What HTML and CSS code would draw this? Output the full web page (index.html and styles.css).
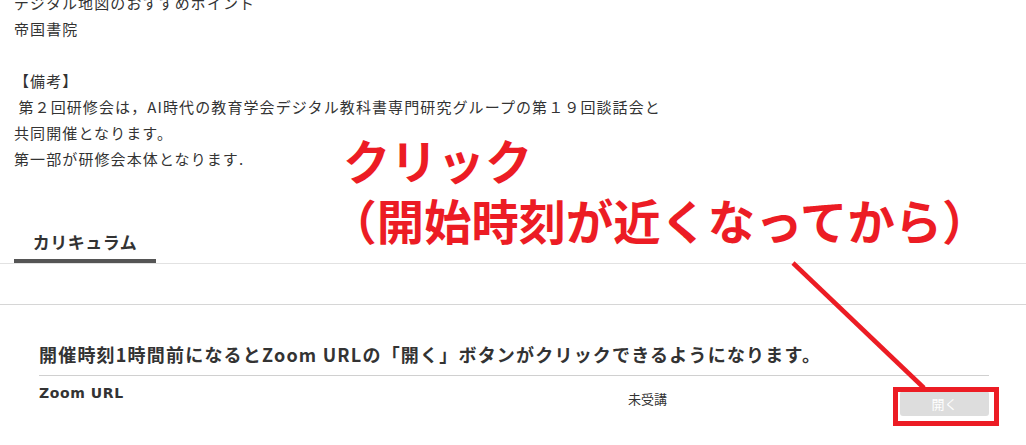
FILE: index.html
```html
<!DOCTYPE html>
<html lang="ja">
<head>
    <meta charset="UTF-8">
    <meta name="viewport" content="width=device-width, initial-scale=1.0">
    <title>研修会 | カリキュラム</title>
    <link rel="stylesheet" href="styles.css">
</head>
<body>
    <div class="page">
        <!-- Notes -->
        <div class="notes">
            デジタル地図のおすすめポイント<br>
            帝国書院<br>
            <br>
            【備考】<br>
            &nbsp;第２回研修会は，AI時代の教育学会デジタル教科書専門研究グループの第１９回談話会と<br>
            共同開催となります。<br>
            第一部が研修会本体となります.
        </div>

        <!-- Tabs -->
        <div class="tabs">
            <span class="tab">カリキュラム</span>
        </div>

        <!-- Curriculum -->
        <section class="course">
            <h2 class="course-title">開催時刻1時間前になるとZoom URLの「開く」ボタンがクリックできるようになります。</h2>
            <div class="zoom-row">
                <div class="zoom-label">Zoom URL</div>
                <div class="zoom-status">未受講</div>
                <button class="open-btn" disabled>開く</button>
            </div>
        </section>

        <!-- Red annotation over the page -->
        <div class="annotation">
            <span class="annotation-line">クリック</span>
            <span class="annotation-line annotation-sub">（開始時刻が近くなってから）</span>
        </div>
        <svg class="annotation-arrow" width="1026" height="445" viewBox="0 0 1026 445">
            <line x1="793" y1="263" x2="924" y2="388" stroke="#ec1c24" stroke-width="4.5" />
            <rect x="895.5" y="389.5" width="101" height="34" fill="none" stroke="#ec1c24" stroke-width="5" />
        </svg>
    </div>
</body>
</html>
```

FILE: styles.css
```css
body {
    margin: 0;
    padding: 0;
    background-color: #fff;
    color: #333;
    font-family: "Noto Sans CJK JP", sans-serif;
    overflow: hidden;
}

.page {
    position: relative;
    height: 445px;
    overflow: hidden;
}

.notes {
    margin-top: -10px;
    padding: 0 14px;
    font-size: 15px;
    line-height: 26px;
    letter-spacing: 1.1px;
}

.tabs {
    display: flex;
    margin-top: 48px;
    padding-left: 14px;
    border-bottom: 1px solid #e2e2e2;
}

.tab {
    width: 142px;
    padding: 10px 0 5px;
    text-align: center;
    font-size: 17px;
    font-weight: bold;
    line-height: 24px;
    letter-spacing: 0.5px;
    border-bottom: 4px solid #555;
}

.course {
    margin-top: 40px;
    padding: 36px 37px 0 39px;
    border-top: 1px solid #d6d6d6;
}

.course-title {
    margin: 0;
    padding-bottom: 8px;
    font-size: 18px;
    font-weight: bold;
    line-height: 26px;
    letter-spacing: 1.2px;
    border-bottom: 1px solid #d0d0d0;
}

.zoom-row {
    display: flex;
    align-items: flex-start;
}

.zoom-label {
    width: 589px;
    padding-top: 7px;
    font-family: "DejaVu Sans", sans-serif;
    font-size: 14px;
    font-weight: bold;
    line-height: 20px;
    letter-spacing: 0.6px;
}

.zoom-status {
    flex: 1;
    padding-top: 14px;
    font-size: 13px;
    line-height: 18px;
}

.open-btn {
    width: 89px;
    height: 25px;
    margin-top: 15px;
    padding: 0;
    background-color: #ddd;
    color: #fff;
    border: none;
    border-radius: 3px;
    font-family: "Noto Sans CJK JP", sans-serif;
    font-size: 13px;
}

.annotation {
    position: absolute;
    top: 130px;
    left: 343px;
    color: #ec1c24;
    font-size: 47.3px;
    font-weight: bold;
    line-height: 60px;
    white-space: nowrap;
}

.annotation-line {
    display: block;
}

.annotation-sub {
    margin-left: -13.5px;
}

.annotation-arrow {
    position: absolute;
    top: 0;
    left: 0;
    pointer-events: none;
}
```
